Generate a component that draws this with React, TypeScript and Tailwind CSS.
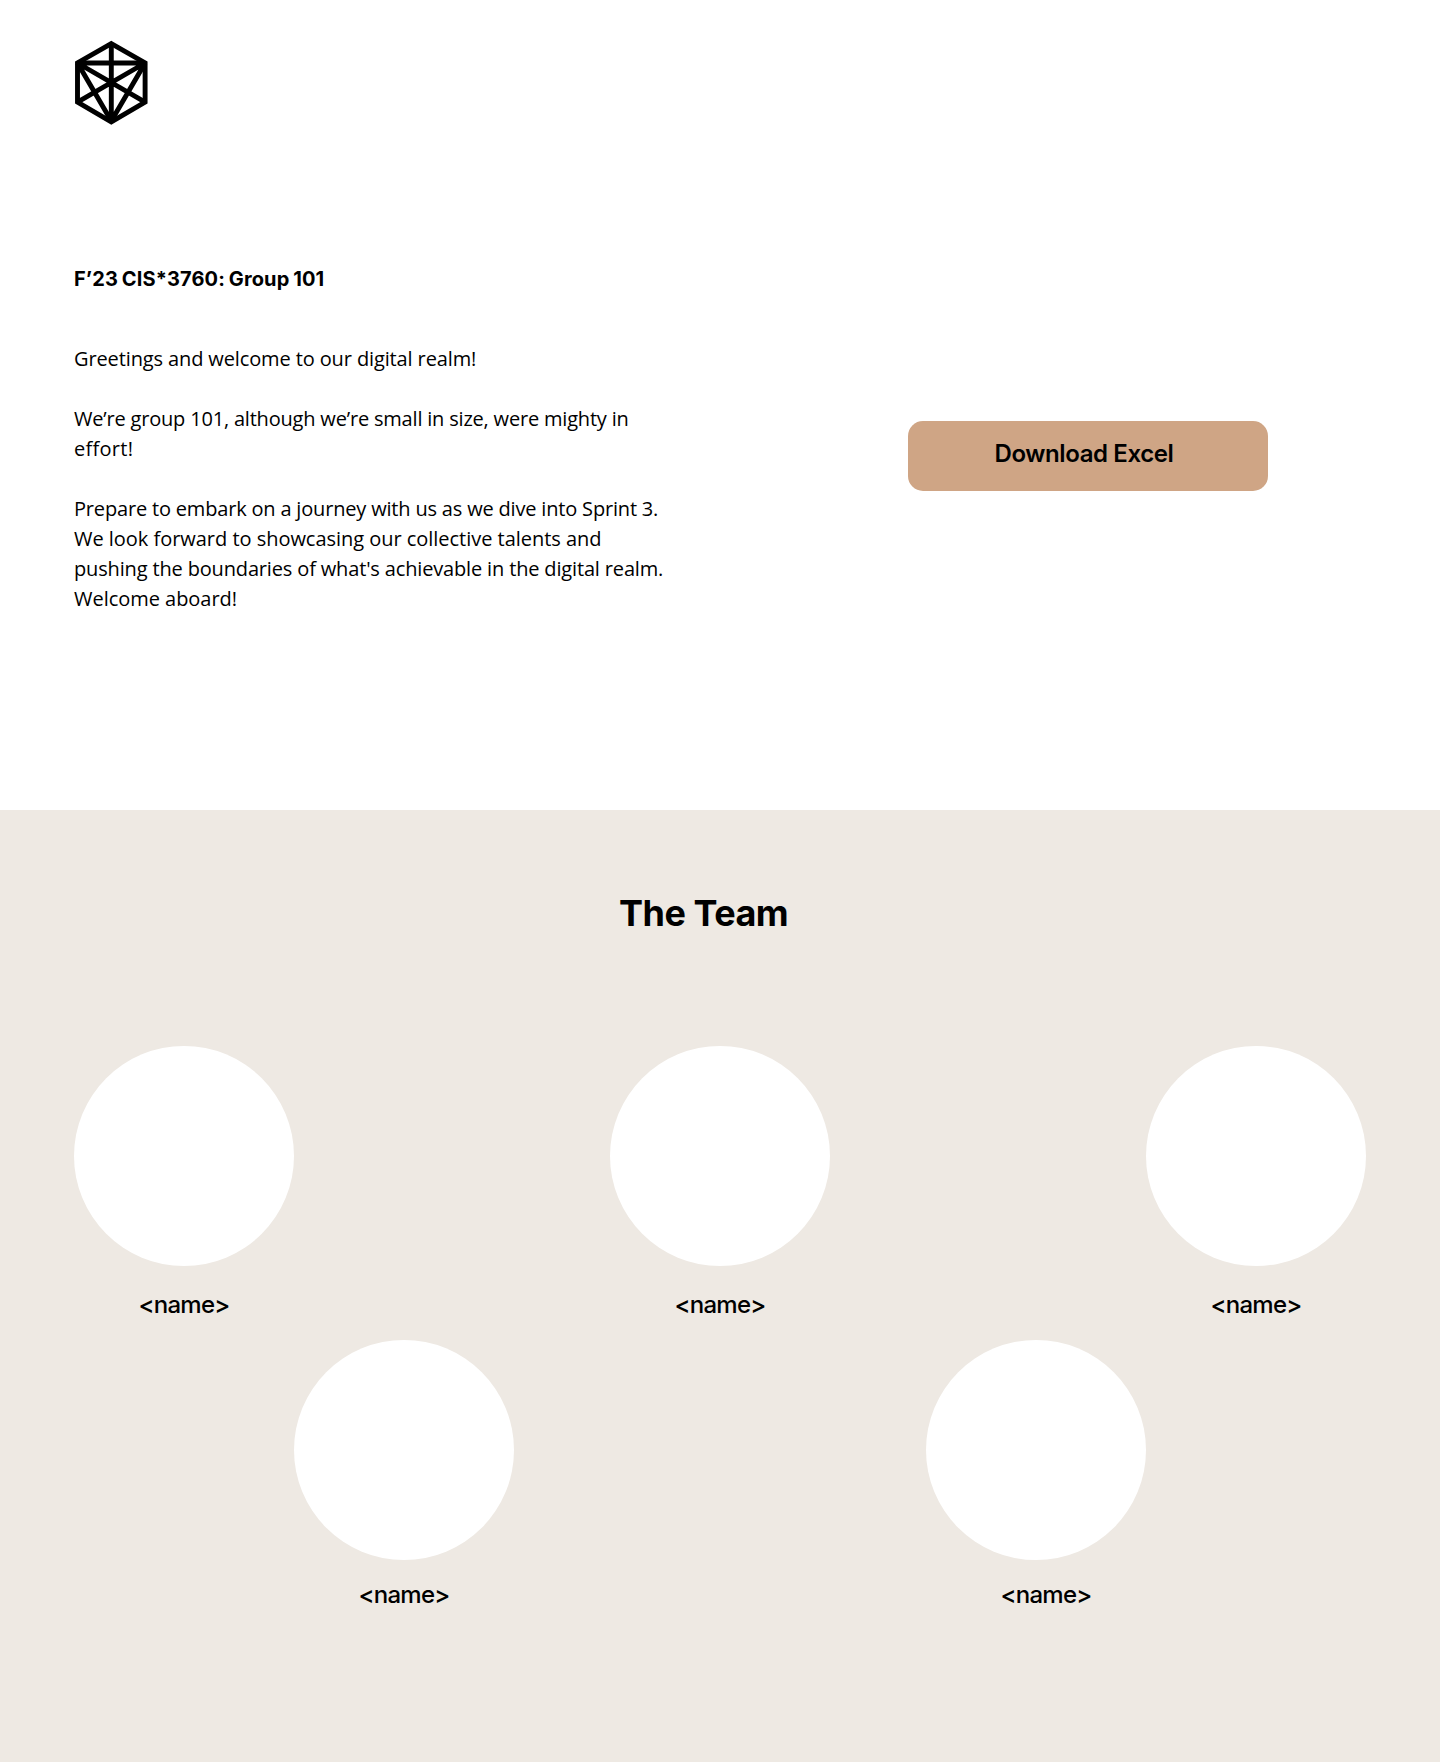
function Logo() {
  return (
    <svg className="block h-[86px] w-[74px]" viewBox="0 0 74 86" fill="none" stroke="black" strokeWidth="4.9">
      <path d="M37.3 3.6 71.1 23V62.2L37.3 81.8 3.5 62.2V23Z" strokeLinejoin="miter" />
      <path d="M3.5 23H71.1M37.3 4V81M3.5 23 71.1 62.2M71.1 23 3.5 62.2M3.5 23 37.3 81M71.1 23 37.3 81" />
    </svg>
  );
}

type MemberProps = { name: string; captionClass: string };

function Member({ name, captionClass }: MemberProps) {
  return (
    <figure className="flex w-[220px] flex-col items-center">
      <div className="size-[220px] rounded-full bg-white" />
      <figcaption className={`text-2xl/[30px] font-medium tracking-[-0.75px] ${captionClass}`}>{name}</figcaption>
    </figure>
  );
}

export default function App() {
  return (
    <div className="h-[1762px] w-[1440px] overflow-hidden bg-white font-['Inter',sans-serif] text-black">
      <header className="h-[810px] px-[74px] pt-10">
        <Logo />
        <div className="mt-[138px] flex">
          <div className="w-[620px] shrink-0 whitespace-nowrap">
            <h1 className="text-xl/[30px] font-bold tracking-[0.12px] [word-spacing:-1px]">F’23 CIS*3760: Group 101</h1>
            <div className="mt-[50px] flex flex-col gap-[30px] font-['Open_Sans',sans-serif] text-xl/[30px]">
              <p className="tracking-[-0.12px]">Greetings and welcome to our digital realm!</p>
              <p>
                <span className="block tracking-[-0.19px]">We’re group 101, although we’re small in size, were mighty in</span>
                <span className="block tracking-[0.28px]">effort!</span>
              </p>
              <p>
                <span className="block tracking-[-0.18px]">Prepare to embark on a journey with us as we dive into Sprint 3.</span>
                <span className="block tracking-[-0.03px]">We look forward to showcasing our collective talents and</span>
                <span className="block tracking-[-0.155px]">pushing the boundaries of what's achievable in the digital realm.</span>
                <span className="block tracking-[-0.03px]">Welcome aboard!</span>
              </p>
            </div>
          </div>
          <button className="ml-[214px] mt-[157px] flex h-[70px] w-[360px] shrink-0 items-start justify-center rounded-[15px] bg-[#cfa585] pr-[8px] pt-[18px] text-2xl/[30px] font-semibold tracking-[-0.4px]">
            Download Excel
          </button>
        </div>
      </header>
      <section className="h-[952px] bg-[#eee9e3] px-[74px] pt-[83px]">
        <h2 className="pl-[545px] text-[36px]/[40px] font-bold tracking-[-0.5px]">The Team</h2>
        <div className="mt-[113px] flex h-[294px] justify-between">
          <Member name="<name>" captionClass="mt-6" />
          <Member name="<name>" captionClass="mt-6" />
          <Member name="<name>" captionClass="mt-6" />
        </div>
        <div className="flex gap-[412px] pl-[220px]">
          <Member name="<name>" captionClass="mt-5" />
          <Member name="<name>" captionClass="mt-5 ml-5" />
        </div>
      </section>
    </div>
  );
}
